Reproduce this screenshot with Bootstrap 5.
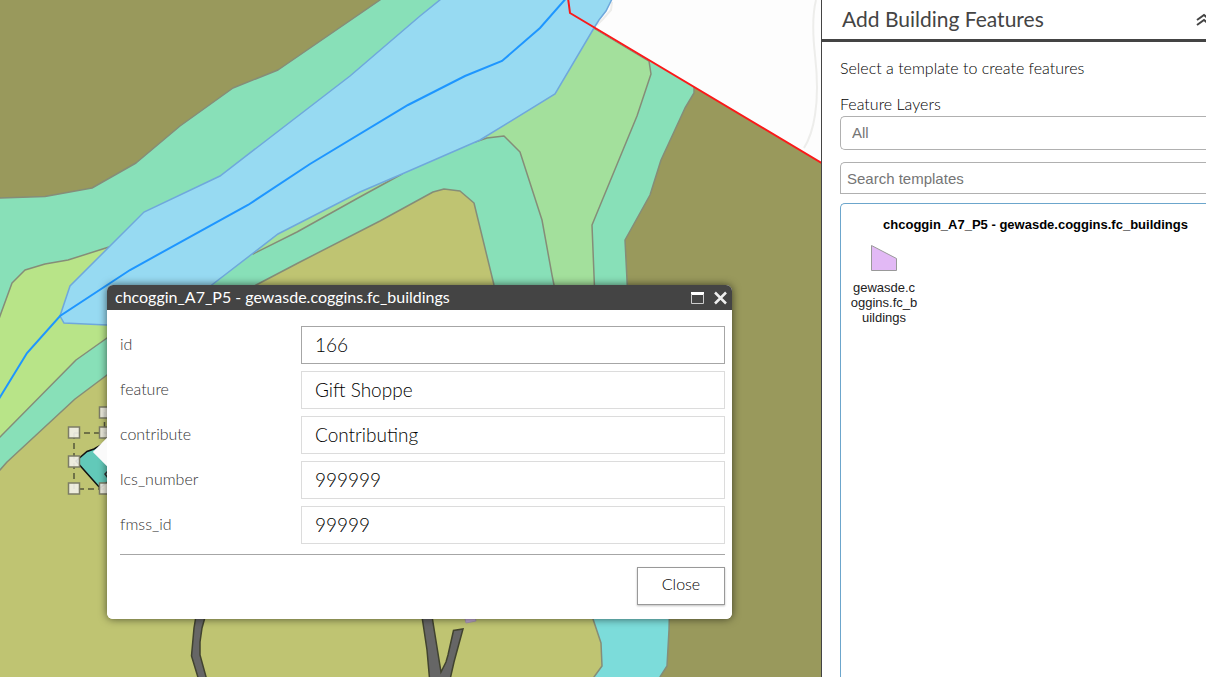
<!DOCTYPE html>
<html lang="en">
<head>
<meta charset="utf-8">
<meta name="viewport" content="width=device-width, initial-scale=1">
<title>Add Building Features</title>
<link href="https://cdn.jsdelivr.net/npm/bootstrap@5.3.0/dist/css/bootstrap.min.css" rel="stylesheet">
<style>
  body { font-family: Lato, "Liberation Sans", sans-serif; font-size: 16px; line-height: 20px; color: #222; }
  .map-pane { background: #99995c; min-width: 0; }
  .map-art { display: block; width: 100%; height: 100%; }

  /* feature popup floating over the map */
  .popup-box { left: 107px; top: 285px; width: 625px; border-radius: 6px; box-shadow: 0 0 8px rgba(0,0,0,.6); }
  .popup-box::before { content: ""; position: absolute; left: -10px; top: 157px; width: 20px; height: 20px; background: #fafafa; transform: rotate(45deg); }
  .popup-head { height: 25px; background: #444; color: #fff; border-radius: 6px 6px 0 0; padding: 0 5px 0 8px; }
  .popup-head h2 { font-size: 16px; line-height: 20px; font-weight: 400; padding-bottom: 2px; }
  .icon-btn { background: none; border: 0; padding: 0; line-height: 0; color: #fff; }
  .popup-body { padding: 16px 7px 14px 13px; border-radius: 0 0 6px 6px; }
  .attr-list { gap: 7px; }
  .attr-label { width: 181px; padding-bottom: 2px; color: #333; font-weight: 300; }
  .attr-field { min-width: 0; height: 38px; border: 1px solid #dcdcdc; border-radius: 0; padding: 0 13px 2px; font-size: 19px; color: #000; font-weight: 300; }
  .attr-field.active-field { border-color: #a6a6a6; }
  .popup-foot { margin-top: 10px; padding-top: 12px; border-top: 1px solid #a6a6a6; }
  .close-btn { width: 88px; height: 38px; padding: 0 0 4px; background: #fff; border: 1px solid #999; border-radius: 0; font-size: 16px; color: #000; font-weight: 300; box-shadow: 0 1px 2px rgba(0,0,0,.25); }

  /* editing panel */
  .edit-pane { flex: 0 0 385px; border-left: 1px solid #444; }
  .pane-head { height: 42px; border-bottom: 3px solid #444; padding-left: 20px; color: #444; }
  .pane-head h1 { font-size: 21px; line-height: 24px; font-weight: 400; padding-bottom: 2px; }
  .pane-body { padding: 16px 0 0 18px; color: #000; }
  .pane-text { font-weight: 300; }
  .pane-field { border: 1px solid #b0b0b0; border-right: 0; border-radius: 5px 0 0 0; background: #fff; font-family: "Liberation Sans", Arial, sans-serif; font-size: 15px; color: #757575; }
  .pane-field::placeholder { color: #757575; }
  .layer-label { margin-bottom: 2px; }
  .layer-pick { height: 34px; padding: 0 11px; border-radius: 5px 0 0 5px; appearance: none; }
  .search-box { height: 32px; padding: 0 6px; }
  .template-list { margin-top: 9px; border: 1px solid #6ca6cc; border-right: 0; border-bottom: 0; border-radius: 5px 0 0 0; padding: 13px 0 0 6px; font-family: "Liberation Sans", Arial, sans-serif; }
  .template-list h3 { font-size: 13px; line-height: 16px; font-weight: 700; color: #000; padding-left: 18px; }
  .template-item { width: 74px; border: 0; background: none; padding: 11px 3px 0; font-size: 13px; line-height: 15px; word-break: break-all; color: #222; }
</style>
</head>
<body>
<div class="d-flex vh-100 overflow-hidden">
  <main class="map-pane position-relative flex-grow-1 overflow-hidden">
    <svg class="map-art" role="img" aria-label="Map">
      <g stroke="#858d78" stroke-width="1.5" stroke-linejoin="round">
        <!-- outer bank -->
        <path fill="#88e0b8" d="M-5 198 0 198 45 196.500 92 188 136 163 180 126 233 88 278 70 380 0 388 -8 694 -8V93L685 108 661 160 650 195 625 240 628 300V500H-5Z"/>
        <!-- lower pond -->
        <path fill="#7cdcda" d="M560 590H670L669 630 667 666 660 677V690H550Z"/>
        <!-- meadow -->
        <path fill="#bfc472" d="M-5 475 0 470 7 462 75 399 107 375 200 315 258 284 300 262 380 221 433 192 444 189 460 191 474 203 494 285 590 600 593 619 601 643 602 666 594 677V690H-5Z"/>
        <path fill="#b8e488" d="M-5 330 0 316 12 283 25 270 45 264 68 260 109 247 200 240 150 315 107 338 76 360 0 437-5 442Z"/>
        <path fill="#a3e09c" d="M594 28 649 61 651 74 637 116 592 225 595 300H557L552 275 542 220 520 152 504 136 487 138 475 142 540 60Z"/>
        <path fill="#a3e09c" d="M253 254 297 232 358 198 402 174 370 170 270 230Z"/>
      </g>
      <path fill="#fdfdfd" d="M594 28 602 14 608 7 612-5H830V168Z"/>
      <path fill="none" stroke="#ededeb" stroke-width="2" d="M816 0Q811 20 815 55T815 115Q812 135 804 148M612 2 611 10 603 19 597 25"/>
      <path fill="#97daf2" stroke="#6fa8dc" stroke-width="1.500" d="M446-5 420 16 350 76 220 176 144 212 70 286 60 316 64 323 107 325 160 325 213 284 278 234 360 192 402 174 480 140 555 94 594 28 599 20 606 11 614-5Z"/>
      <path fill="none" stroke="#1e96ff" stroke-width="2" d="M569-5 540 28 502 61 465 76 408 105 310 164 248 205 130 270 60 316 27 353-3 402"/>
      <path fill="none" stroke="#fa1919" stroke-width="2" d="M568-2 570 13 825 165"/>
      <!-- paths -->
      <g fill="#666" stroke="#41432f" stroke-width="1.500">
        <path d="M197 610 194 628 191.500 656 200 684H208L200 655V642L202 628 207 610Z"/>
        <path d="M421 610 427 650 430 684H449L454 662 463 629 453.500 630.500 448 655 446 662 441 672 431 610Z"/>
      </g>
      <path fill="#c0a8d0" stroke="#a99aae" d="M464 615 466 623 476 621 474 612Z"/>
      <!-- selected building and its edit handles -->
      <path fill="#62c9b9" stroke="#111" stroke-width="1.500" d="M76 461 87 451.500 94 449 110 440V480L100 488Z"/>
      <path fill="none" stroke="#333" stroke-width="1.500" d="M108 471 105 474 108 478"/>
      <g fill="none" stroke="#55573a" stroke-width="1.500" stroke-dasharray="6 4">
        <path d="M74 433H110M74 433V489H110M104.500 412V433"/>
      </g>
      <g fill="#f2f1ea" fill-opacity=".9" stroke="#7c7c66" stroke-width="1.500">
        <path d="M68.500 427h11v11h-11zM68.500 456h11v11h-11zM68.500 483h11v11h-11zM99.500 407h11v11h-11zM99.500 427h11v11h-11zM99.500 483h11v11h-11z"/>
      </g>
    </svg>

    <section class="popup-box position-absolute bg-white" aria-label="Feature attributes">
      <header class="popup-head d-flex align-items-center position-relative">
        <h2 class="m-0 flex-grow-1">chcoggin_A7_P5 - gewasde.coggins.fc_buildings</h2>
        <button class="icon-btn me-2" type="button" aria-label="Maximize">
          <svg width="15" height="14" viewBox="0 0 15 14"><path fill="#fff" d="M0 1h13v3H0z"/><path fill="none" stroke="#ccc" d="M.5 3v9.500h12V3"/></svg>
        </button>
        <button class="icon-btn" type="button" aria-label="Close popup">
          <svg width="13" height="14" viewBox="0 0 13 14"><path stroke="#eee" stroke-width="2.500" d="M1 1.500 12 12.500M12 1.500 1 12.500"/></svg>
        </button>
      </header>
      <form class="popup-body position-relative bg-white">
        <div class="attr-list d-flex flex-column">
          <div class="d-flex align-items-center"><label class="attr-label" for="f-id">id</label><input class="attr-field active-field flex-grow-1" id="f-id" value="166"></div>
          <div class="d-flex align-items-center"><label class="attr-label" for="f-feature">feature</label><input class="attr-field flex-grow-1" id="f-feature" value="Gift Shoppe"></div>
          <div class="d-flex align-items-center"><label class="attr-label" for="f-contribute">contribute</label><input class="attr-field flex-grow-1" id="f-contribute" value="Contributing"></div>
          <div class="d-flex align-items-center"><label class="attr-label" for="f-lcs">lcs_number</label><input class="attr-field flex-grow-1" id="f-lcs" value="999999"></div>
          <div class="d-flex align-items-center"><label class="attr-label" for="f-fmss">fmss_id</label><input class="attr-field flex-grow-1" id="f-fmss" value="99999"></div>
        </div>
        <div class="popup-foot d-flex justify-content-end">
          <button class="btn close-btn" type="button">Close</button>
        </div>
      </form>
    </section>
  </main>

  <aside class="edit-pane d-flex flex-column bg-white overflow-hidden">
    <header class="pane-head d-flex align-items-center flex-shrink-0">
      <h1 class="m-0 flex-grow-1">Add Building Features</h1>
      <button class="icon-btn" type="button" aria-label="Collapse panel">
        <svg width="10" height="14" viewBox="0 0 10 14"><path fill="none" stroke="#444" stroke-width="2" d="M1 7 8 2l5 4M1 12 8 7l5 4"/></svg>
      </button>
    </header>
    <div class="pane-body d-flex flex-column flex-grow-1">
      <p class="pane-text mb-3">Select a template to create features</p>
      <label class="pane-text layer-label" for="layers">Feature Layers</label>
      <select class="pane-field layer-pick w-100 mb-2" id="layers"><option>All</option></select>
      <input class="pane-field search-box w-100 mt-1" type="text" placeholder="Search templates" aria-label="Search templates">
      <div class="template-list flex-grow-1">
        <h3 class="text-center m-0">chcoggin_A7_P5 - gewasde.coggins.fc_buildings</h3>
        <button class="template-item text-center" type="button">
          <svg class="d-block mx-auto mb-2" width="28" height="28" viewBox="0 0 28 28"><path fill="#e2b9f5" stroke="#999" d="M1.500 1.500 26.500 14.500V26.500H1.500Z"/></svg>
          gewasde.coggins.fc_buildings
        </button>
      </div>
    </div>
  </aside>
</div>
<script src="https://cdn.jsdelivr.net/npm/bootstrap@5.3.0/dist/js/bootstrap.bundle.min.js"></script>
</body>
</html>
